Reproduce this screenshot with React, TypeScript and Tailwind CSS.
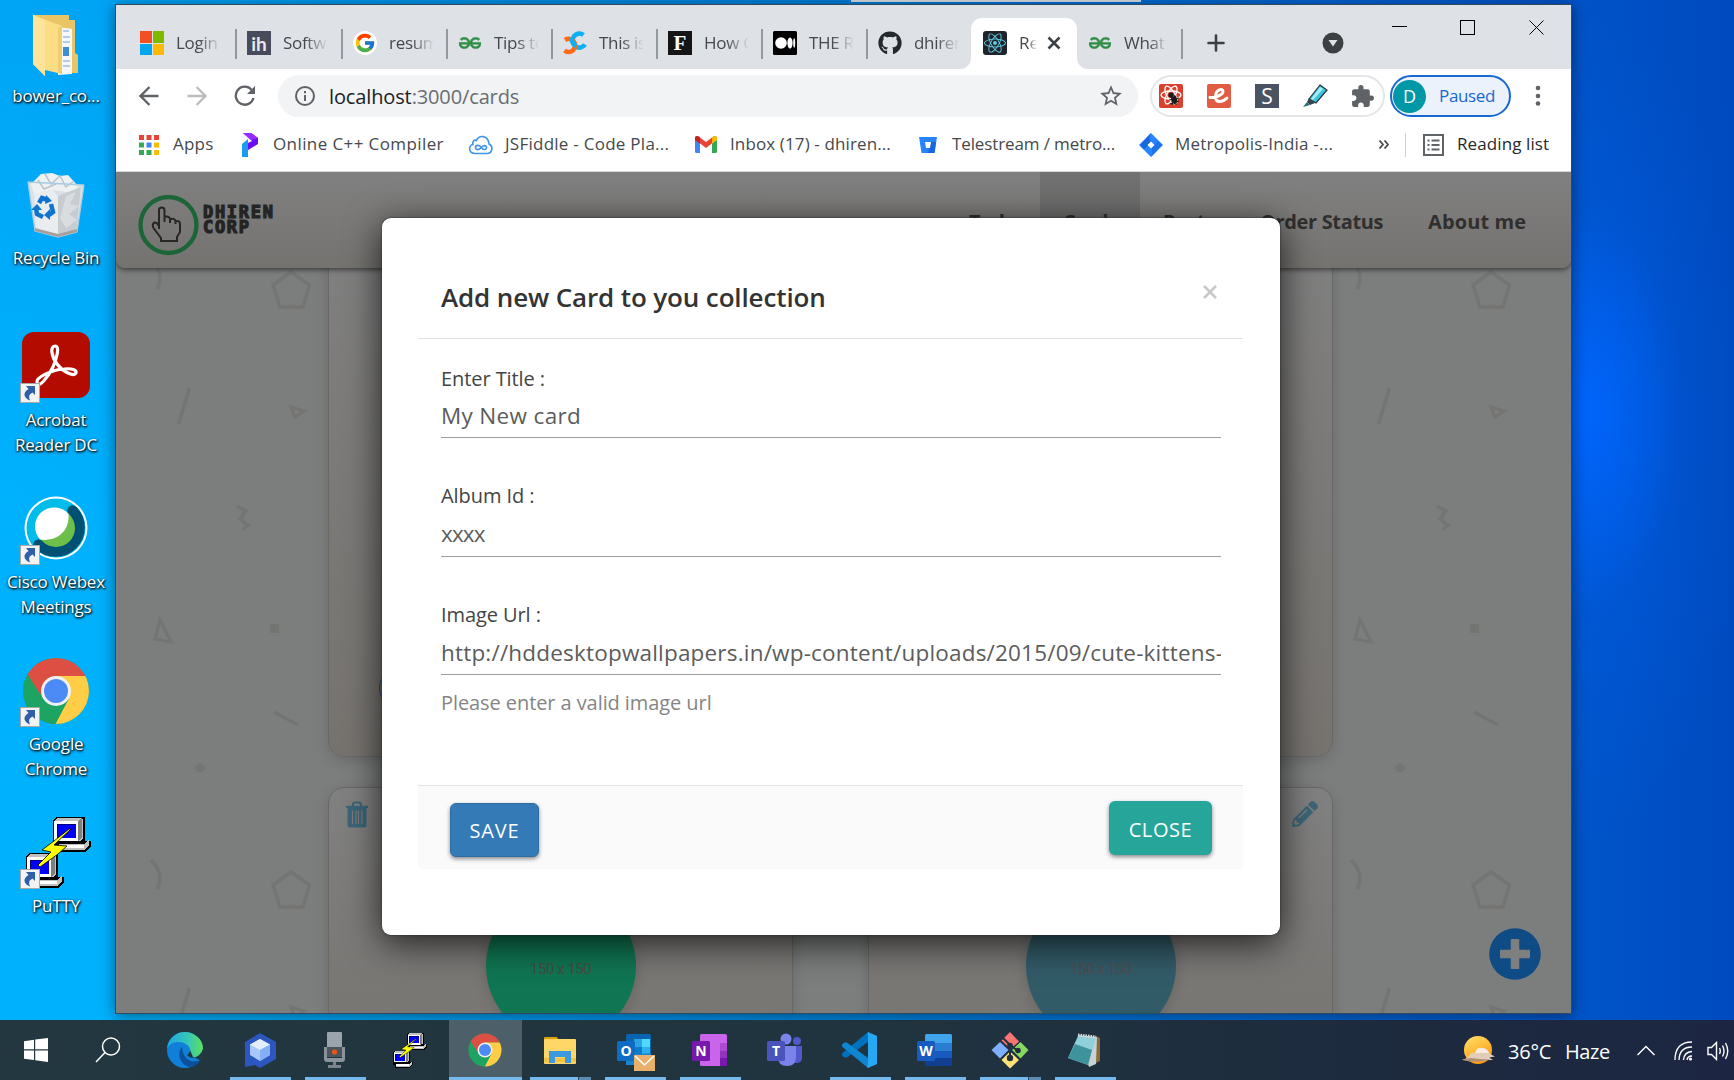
import React from "react";
import { FaGithub, FaPencilAlt, FaReact } from "react-icons/fa";
import { FcGoogle } from "react-icons/fc";
import { SiGeeksforgeeks } from "react-icons/si";
import { MdExtension, MdStarBorder } from "react-icons/md";

/* ---------- shared drawings ---------- */

function ChromeLogo({ id }: { id: string }) {
  return (
    <g>
      <clipPath id={id}>
        <circle cx="0" cy="0" r="33" />
      </clipPath>
      <g clipPath={`url(#${id})`}>
        <rect x="-33" y="-33" width="66" height="66" fill="#1da462" />
        <path d="M-40 -30L-13 7 0 -15H40V-40H-40z" fill="#dd4f43" />
        <path d="M0 -15H40V40H-4L13 7z" fill="#ffcd46" />
        <path d="M-28.500 -17L-13 8 0 15 13 7.500 -2 34H-40V-30z" fill="#1da462" />
      </g>
      <circle cx="0" cy="0" r="15" fill="#f1f1f1" />
      <circle cx="0" cy="0" r="12" fill="#4c8bf5" />
    </g>
  );
}

function PuttyComputer() {
  return (
    <g shapeRendering="crispEdges">
      <path d="M0 3L3 0H32V24H38V29L33 35H4V30H0z" fill="#000" />
      <path d="M1 4L4 1H28L30 3V22L27 24H1z" fill="#c0c0c0" />
      <path d="M1 4H25V24H1z" fill="#fff" />
      <path d="M25 4L29 1V21L25 24z" fill="#808080" />
      <rect x="4" y="7" width="19" height="14" fill="#00f" />
      <path d="M4 7H23V8H5V21H4z" fill="#00007b" />
      <path d="M6 27H31L36 23V28L32 33H6z" fill="#c0c0c0" />
      <path d="M6 28H31V31H6z" fill="#fff" />
    </g>
  );
}

function PuttyLogo() {
  return (
    <g>
      <g transform="translate(27 0)">
        <PuttyComputer />
      </g>
      <g transform="translate(0 36)">
        <PuttyComputer />
      </g>
      <path d="M45 12L28 28 41 29 32 37 14 50 12 48 25 35 16 33 28 24 43 12z" fill="#ff0" stroke="#000" strokeWidth="0.800" />
    </g>
  );
}

function ShortcutBadge() {
  return (
    <g transform="translate(20 59)">
      <rect x="0.500" y="0.500" width="19" height="19" fill="#f3f3f3" stroke="#a8a8a8" />
      <path d="M6 3H15V12L12.500 9.500C8 12 9 14 10 17.500 4 15 2 10 8.500 6z" fill="#2f5fa6" />
    </g>
  );
}

/* ---------- desktop ---------- */

function FolderIcon() {
  return (
    <>
      <path d="M33 15H69V20H75V53L78 55V73H60L33 60z" fill="#e9c566" />
      <path d="M58 27L72 29V74L58 75z" fill="#f5f7f9" />
      <path d="M63 31H69M63 37H70M63 42H70M63 61H70M63 66H70" stroke="#9fc0df" strokeWidth="1.500" />
      <path d="M63 47H69V56H63z" fill="#3f8fd0" />
      <path d="M33 15L62 26V74L45 70V76L33 64z" fill="#fbdd85" />
      <path d="M33 15L45 20V76L33 64z" fill="#fde49a" />
      <path d="M62 26L58 28V73L62 74z" fill="#f0cd70" />
    </>
  );
}

function RecycleIcon() {
  return (
    <>
      <path d="M28 20L84 23 77 70 58 75 35 69z" fill="#d9e1e6" />
      <path d="M31 22L41 12 52 11 60 14 68 13 78 24 74 31 52 28 34 32z" fill="#eef1f3" />
      <path d="M45 12L51 22 60 14 66 25 74 19M38 18L44 27 56 22" fill="none" stroke="#bcc5cb" strokeWidth="1.500" />
      <path d="M34 32L52 28 58 34V73L36 68z" fill="#e9edf0" />
      <path d="M58 34L81 25 76 70 58 75z" fill="#c7ccd1" />
      <path d="M66 34L76 30 70 42 79 44 69 52 77 58 66 66 60 56z" fill="#d9dde0" />
      <path d="M28 20L84 23M28 20L35 69 58 75 77 70 84 23" fill="none" stroke="#a8cbe0" strokeWidth="1.300" />
      <path d="M35 66L58 72 77 67V70L58 75 35 69z" fill="#a8a09c" />
      <g fill="none" stroke="#1173d0" strokeWidth="4.500">
        <path d="M39 41L42 36 48 38" />
        <path d="M51 42L53 50 49 53" />
        <path d="M43 55L37 52 36 46" />
      </g>
      <path d="M46 33L52 39 45 42zM50 47V58L44 53zM31 48L37 42 42 48z" fill="#1173d0" />
    </>
  );
}

function AcrobatIcon() {
  return (
    <>
      <rect x="22" y="8" width="68" height="66" rx="12" fill="#b30b00" />
      <path
        d="M37 58C36 54 50 46 64 45C72 44 77 46 76 49C74 53 63 48 57 40C51 32 50 22 55 22C60 22 57 33 53 43C48 53 38 66 37 58z"
        fill="none"
        stroke="#fff"
        strokeWidth="3.200"
      />
      <ShortcutBadge />
    </>
  );
}

function WebexIcon() {
  return (
    <>
      <circle cx="56" cy="42" r="31.500" fill="#fff" />
      <circle cx="56" cy="42" r="29.500" fill="#00bceb" />
      <path d="M72.500 24.500A24 24 0 1 1 38.500 58.500" fill="none" stroke="#005073" strokeWidth="10.500" strokeLinecap="round" />
      <circle cx="56" cy="42" r="19" fill="#6ebe4a" />
      <path d="M68.500 27.700A19 19 0 1 0 40 53.500C56 56 70 46 68.500 27.700z" fill="#fff" />
      <ShortcutBadge />
    </>
  );
}

const desktopItems = [
  { lines: ["bower_co..."], icon: <FolderIcon /> },
  { lines: ["Recycle Bin"], icon: <RecycleIcon /> },
  { lines: ["Acrobat", "Reader DC"], icon: <AcrobatIcon /> },
  { lines: ["Cisco Webex", "Meetings"], icon: <WebexIcon /> },
  {
    lines: ["Google", "Chrome"],
    icon: (
      <>
        <g transform="translate(56 43)">
          <ChromeLogo id="desk-chrome" />
        </g>
        <ShortcutBadge />
      </>
    ),
  },
  {
    lines: ["PuTTY"],
    icon: (
      <>
        <g transform="translate(26 7)">
          <PuttyLogo />
        </g>
        <ShortcutBadge />
      </>
    ),
  },
];

function Desktop() {
  return (
    <div className="flex w-[112px] flex-col">
      {desktopItems.map((d) => (
        <div key={d.lines[0]} className="flex h-[162px] flex-col items-center">
          <svg width="112" height="83" viewBox="0 0 112 83" className="shrink-0">
            {d.icon}
          </svg>
          {d.lines.map((l) => (
            <span
              key={l}
              className="text-[17px] leading-[25px] tracking-[-0.2px] whitespace-nowrap text-white [text-shadow:1px_1px_2px_#000,0_1px_3px_rgba(0,0,0,0.8)]"
            >
              {l}
            </span>
          ))}
        </div>
      ))}
    </div>
  );
}

/* ---------- tab strip ---------- */

const tabs = [
  {
    label: "Login",
    box: "w-[105px] pl-[8px]",
    icon: (
      <div className="grid h-6 w-6 grid-cols-2 gap-[1px]">
        <i className="bg-[#f25022]" />
        <i className="bg-[#7fba00]" />
        <i className="bg-[#00a4ef]" />
        <i className="bg-[#ffb900]" />
      </div>
    ),
  },
  {
    label: "Softwa",
    box: "w-[106px] pl-[10px]",
    icon: (
      <div className="flex h-6 w-6 items-end justify-center bg-[#474b5c] font-['Lato'] text-[19px] leading-[22px] font-bold text-[#e8e8ea]">
        ih
      </div>
    ),
  },
  {
    label: "resume",
    box: "w-[105px] pl-[10px]",
    icon: (
      <div className="flex h-6 w-6 items-center justify-center rounded-full bg-white">
        <FcGoogle size={22} />
      </div>
    ),
  },
  {
    label: "Tips to",
    box: "w-[105px] pl-[10px]",
    icon: <SiGeeksforgeeks size={22} color="#2f8d46" stroke="#2f8d46" strokeWidth="0.600" />,
  },
  {
    label: "This is",
    box: "w-[105px] pl-[10px]",
    icon: (
      <svg width="24" height="24" viewBox="0 0 24 24" fill="none" strokeWidth="4.600">
        <path d="M20.500 4A6.800 7 0 1 0 22 13.500" stroke="#0fb0f3" />
        <path d="M2 9A6.500 6.500 0 1 1 1.500 19.500" stroke="#ff6a13" />
        <path d="M9 6.500C8.500 10 10 13 13 15" stroke="#0fb0f3" />
      </svg>
    ),
  },
  {
    label: "How C",
    box: "w-[105px] pl-[10px]",
    icon: (
      <div className="flex h-6 w-6 items-center justify-center bg-[#151515] font-['Liberation_Serif'] text-[21px] leading-none font-bold text-white">
        F
      </div>
    ),
  },
  {
    label: "THE RI",
    box: "w-[105px] pl-[10px]",
    icon: (
      <svg width="24" height="24" viewBox="0 0 24 24">
        <rect width="24" height="24" rx="1.500" fill="#000" />
        <circle cx="8" cy="12" r="5.800" fill="#fff" />
        <ellipse cx="17" cy="12" rx="2.600" ry="5.500" fill="#fff" />
        <ellipse cx="21.200" cy="12" rx="1" ry="4.800" fill="#fff" />
      </svg>
    ),
  },
  { label: "dhiren", box: "w-[103px] pl-[10px]", icon: <FaGithub size={24} color="#24292e" /> },
];

function TabStrip() {
  return (
    <div className="flex h-[64px] shrink-0 bg-[#dee1e6]">
      <div className="flex pt-6 pl-[16px]">
        {tabs.map((t, i) => (
          <div
            key={t.label}
            className={"flex h-[30px] items-center " + t.box + (i < 7 ? " border-r-2 border-[#94989e]" : "")}
          >
            <div className="mb-[2px] flex h-6 w-6 shrink-0 items-center justify-center">{t.icon}</div>
            <span className="mb-[2px] ml-3 w-[45px] overflow-hidden text-[17px] leading-6 tracking-[-0.3px] whitespace-nowrap text-[#45494d] [mask-image:linear-gradient(to_right,#000_50%,transparent)]">
              {t.label}
            </span>
          </div>
        ))}
      </div>
      <div className="relative mt-[13px] flex h-[51px] w-[106px] items-center rounded-t-[11px] bg-white pb-[2px] pl-3">
        <svg className="absolute bottom-0 -left-[11px]" width="11" height="11" viewBox="0 0 11 11">
          <path d="M11 0V11H0A11 11 0 0 0 11 0z" fill="#fff" />
        </svg>
        <svg className="absolute -right-[11px] bottom-0" width="11" height="11" viewBox="0 0 11 11">
          <path d="M0 0V11H11A11 11 0 0 1 0 0z" fill="#fff" />
        </svg>
        <div className="flex h-6 w-6 items-center justify-center rounded-[3px] bg-[#20232a]">
          <FaReact size={22} color="#61c9e4" />
        </div>
        <span className="ml-3 w-[18px] overflow-hidden text-[17px] whitespace-nowrap text-[#45494d] [mask-image:linear-gradient(to_right,#000_50%,transparent)]">
          Rea
        </span>
        <svg className="ml-[10px]" width="14" height="14" viewBox="0 0 14 14" stroke="#3c4043" strokeWidth="2.500">
          <path d="M1.500 1.500L12.500 12.500M12.500 1.500L1.500 12.500" />
        </svg>
      </div>
      <div className="mt-6 ml-[12px] flex h-[30px] w-[94px] items-center border-r-2 border-[#94989e] pb-[2px]">
        <SiGeeksforgeeks size={22} color="#2f8d46" stroke="#2f8d46" strokeWidth="0.600" />
        <span className="ml-[13px] w-[43px] overflow-hidden text-[17px] tracking-[-0.3px] whitespace-nowrap text-[#45494d] [mask-image:linear-gradient(to_right,#000_60%,transparent)]">
          What i
        </span>
      </div>
      <svg className="mt-[29px] ml-[24px]" width="18" height="18" viewBox="0 0 18 18" stroke="#3c4043" strokeWidth="2.600" strokeLinecap="round">
        <path d="M9 1.500V16.500M1.500 9H16.500" />
      </svg>
      <svg className="mt-[27px] ml-[97px]" width="22" height="22" viewBox="0 0 22 22">
        <circle cx="11" cy="11" r="10.500" fill="#3c4043" />
        <path d="M6.500 8H15.500L11 14.500z" fill="#dee1e6" />
      </svg>
      <div className="mt-[15px] ml-[48px] flex gap-[53px]">
        <svg width="15" height="15" viewBox="0 0 15 15" stroke="#000">
          <path d="M0 6.500H15" />
        </svg>
        <svg width="15" height="15" viewBox="0 0 15 15" stroke="#000" fill="none">
          <rect x="0.500" y="0.500" width="14" height="14" />
        </svg>
        <svg className="ml-px" width="15" height="15" viewBox="0 0 15 15" stroke="#000">
          <path d="M0.500 0.500L14.500 14.500M14.500 0.500L0.500 14.500" />
        </svg>
      </div>
    </div>
  );
}

/* ---------- toolbar ---------- */

function Toolbar() {
  return (
    <div className="flex h-[54px] shrink-0 items-center bg-white">
      <svg className="ml-[23px]" width="20" height="20" viewBox="0 0 20 20" fill="none" stroke="#5f6368" strokeWidth="2.300">
        <path d="M19.500 10H2M10.500 1L1.500 10 10.500 19" />
      </svg>
      <svg className="ml-[28px]" width="20" height="20" viewBox="0 0 20 20" fill="none" stroke="#babcbe" strokeWidth="2.300">
        <path d="M0.500 10H18M9.500 1L18.500 10 9.500 19" />
      </svg>
      <svg className="ml-[27px]" width="22" height="22" viewBox="0 0 22 22" fill="none" stroke="#5f6368" strokeWidth="2.300">
        <path d="M19.500 13A9 9 0 1 1 17.500 4.700" />
        <path d="M21 1V9H13z" fill="#5f6368" stroke="none" />
      </svg>
      <div className="ml-[22px] flex h-[42px] w-[860px] items-center rounded-full bg-[#f1f3f4] pl-[17px]">
        <svg width="20" height="20" viewBox="0 0 20 20" fill="none" stroke="#5f6368" strokeWidth="2">
          <circle cx="10" cy="10" r="9" />
          <path d="M10 9V15M10 5V7.200" />
        </svg>
        <span className="ml-[14px] flex-1 pt-[1px] text-[20px] tracking-[-0.130px] text-[#696d71]">
          <span className="text-[#202124]">localhost</span>:3000/cards
        </span>
        <MdStarBorder size={26} color="#5f6368" className="mr-[14px]" />
      </div>
      <div className="ml-[12px] flex h-[42px] w-[235px] items-center rounded-full border-2 border-[#e3e5e8] pl-[7px]">
        <svg width="24" height="24" viewBox="0 0 24 24">
          <rect width="24" height="24" rx="2" fill="#d9412f" />
          <g fill="none" stroke="#fff" strokeWidth="1.300">
            <ellipse cx="12" cy="11" rx="10" ry="4" />
            <ellipse cx="12" cy="11" rx="10" ry="4" transform="rotate(60 12 11)" />
            <ellipse cx="12" cy="11" rx="10" ry="4" transform="rotate(120 12 11)" />
          </g>
          <circle cx="12" cy="11" r="2.600" fill="#1b1b1b" />
          <path d="M12 13L17 12 18.500 17 16 20.500 12.500 18z" fill="#1b1b1b" />
          <path d="M10 16L20 14M11 20L20 17M13 21L16 11M17 21V14" stroke="#1b1b1b" />
        </svg>
        <svg className="ml-6" width="24" height="24" viewBox="0 0 24 24" fill="none">
          <rect width="24" height="24" rx="2" fill="#e25b43" />
          <path d="M3 13.500C8 14 16 11 16 7.500 16 4 9 5 8.500 12 8 19 15 19 20 14" stroke="#fff" strokeWidth="3" strokeLinecap="round" />
        </svg>
        <div className="ml-6 flex h-6 w-6 items-center justify-center bg-[#4a5362] text-[21px] leading-none font-medium text-white">S</div>
        <svg className="ml-6" width="25" height="24" viewBox="0 0 25 24">
          <path d="M17 1L24 6 13 19 6 15z" fill="#3cc4de" stroke="#27323a" strokeWidth="1.200" />
          <path d="M17 3L20 5 10 16 8 15z" fill="#a9ecf5" />
          <path d="M6 14L12 19 7 21 4 18z" fill="#38444b" />
          <path d="M4 18L7 21 0 23z" fill="#2f6a7a" />
        </svg>
        <MdExtension size={25} color="#5f6368" className="ml-[22px]" />
      </div>
      <div className="ml-[5px] flex h-[42px] w-[121px] items-center rounded-full border-2 border-[#1967d2] bg-[#ecf2fc] pl-[1px]">
        <span className="flex h-[33px] w-[33px] items-center justify-center rounded-full bg-[#0097a7] text-[18px] text-white">D</span>
        <span className="ml-[13px] text-[17px] tracking-[-0.35px] text-[#1967d2]">Paused</span>
      </div>
      <svg className="ml-[24px]" width="6" height="22" viewBox="0 0 6 22" fill="#5f6368">
        <circle cx="3" cy="3" r="2.300" />
        <circle cx="3" cy="11" r="2.300" />
        <circle cx="3" cy="18.500" r="2.300" />
      </svg>
    </div>
  );
}

function Bookmark({ width, text, icon, label }: { width: string; text: string; icon: React.ReactNode; label: string }) {
  return (
    <div className={"flex items-center " + width}>
      {icon}
      <span className={"mb-[2px] whitespace-nowrap " + text}>{label}</span>
    </div>
  );
}

function BookmarksBar() {
  return (
    <div className="flex h-[49px] shrink-0 items-center border-b border-[#d5d7da] bg-white pb-[5px] pl-[23px] text-[17px] leading-6 text-[#45494d]">
      <Bookmark
        width="w-[103px]"
        text="ml-[14px] tracking-[0.2px]"
        label="Apps"
        icon={
          <svg width="20" height="20" viewBox="0 0 20 20">
            <path d="M0 0H5V5H0zM7.500 0H12.500V5H7.500zM15 0H20V5H15z" fill="#ea4335" />
            <path d="M0 7.500H5V12.500H0zM0 15H5V20H0zM7.500 15H12.500V20H7.500z" fill="#34a853" />
            <path d="M7.500 7.500H12.500V12.500H7.500z" fill="#4285f4" />
            <path d="M15 7.500H20V12.500H15zM15 15H20V20H15z" fill="#fbbc05" />
          </svg>
        }
      />
      <Bookmark
        width="w-[227px]"
        text="ml-[15px] tracking-[0.4px]"
        label="Online C++ Compiler"
        icon={
          <svg width="16" height="24" viewBox="0 0 16 24">
            <path d="M1 0H9L16 5V11L6 17V10L10 8z" fill="#6a0df0" />
            <path d="M1 0H9L16 5 9 7z" fill="#9a2bff" />
            <path d="M0 11L6 6V24H0z" fill="#1a9cf5" />
          </svg>
        }
      />
      <Bookmark
        width="w-[226px]"
        text="ml-[12px] tracking-[0.260px]"
        label="JSFiddle - Code Pla..."
        icon={
          <svg width="24" height="20" viewBox="0 0 24 20" fill="none" stroke="#3f95ea" strokeWidth="1.600">
            <path d="M6 18.500C-1 18.500 -0.500 10 4 9.500 3 6 5.500 4.500 7.500 5.500 10 -0.500 19 0 20 9 24.500 11 23.500 18.500 18 18.500z" />
            <path d="M12 12.200C10 9.500 6.500 10 6.500 12.500S10 15.500 12 12.800C14 10 17.500 10 17.500 12.500S14 15.500 12 12.200z" />
          </svg>
        }
      />
      <Bookmark
        width="w-[224px]"
        text="ml-[13px] tracking-[0.120px]"
        label="Inbox (17) - dhiren..."
        icon={
          <svg width="22" height="17" viewBox="0 0 22 17">
            <path d="M0 3H5V17H1.500Q0 17 0 15.500z" fill="#4285f4" />
            <path d="M17 3H22V15.500Q22 17 20.500 17H17z" fill="#34a853" />
            <path d="M0 3.500V2.500C0 0 2.500 -0.500 4 0.800L11 6 18 0.800C19.500 -0.500 22 0 22 2.500V3.500L11 12z" fill="#ea4335" />
            <path d="M17 1.500L18 0.800C19.500 -0.500 22 0 22 2.500V4L17 7.700z" fill="#fbbc04" />
            <path d="M5 1.500L4 0.800C2.500 -0.500 0 0 0 2.500V4L5 7.700z" fill="#c5221f" />
          </svg>
        }
      />
      <Bookmark
        width="w-[220px]"
        text="ml-[15px] tracking-[-0.120px]"
        label="Telestream / metro..."
        icon={
          <svg width="18" height="16" viewBox="0 0 18 16">
            <path d="M0 0H18L15.500 16H2.500z" fill="#2684ff" />
            <path d="M12 5H17L15.500 16H9z" fill="#1a66dd" />
            <path d="M6 5H12L11 11H7z" fill="#fff" />
          </svg>
        }
      />
      <Bookmark
        width="w-[240px]"
        text="ml-[12px] tracking-[0.220px]"
        label="Metropolis-India -..."
        icon={
          <svg width="24" height="24" viewBox="0 0 24 24">
            <path d="M12 0L24 12 12 24 0 12z" fill="#2684ff" />
            <path d="M12 0Q9 5 12 9L5 16.500 1 12z" fill="#1868db" />
            <path d="M12 24Q15 19 12 15L19 8 23 12z" fill="#1e72e8" />
            <path d="M12 8.500L15.500 12 12 15.500 8.500 12z" fill="#fff" />
          </svg>
        }
      />
      <svg width="10" height="9" viewBox="0 0 10 9" fill="none" stroke="#4b4f53" strokeWidth="1.800">
        <path d="M0.500 0.500L4 4.500 0.500 8.500M5.500 0.500L9 4.500 5.500 8.500" />
      </svg>
      <div className="ml-[16px] h-6 w-px bg-[#cfd1d4]" />
      <svg className="ml-[17px]" width="21" height="22" viewBox="0 0 21 22" fill="none" stroke="#5f6368" strokeWidth="2">
        <rect x="1" y="1" width="19" height="20" />
        <path d="M4.500 6.500H6.500M8.500 6.500H16.500M4.500 11H6.500M8.500 11H16.500M4.500 15.500H6.500M8.500 15.500H16.500" />
      </svg>
      <span className="mb-[2px] ml-[13px] tracking-[0.1px] text-[#27292c]">Reading list</span>
    </div>
  );
}

/* ---------- web page ---------- */

function PatternTile() {
  return (
    <g fill="none" stroke="#747473" strokeWidth="3.500">
      <path d="M151 260Q165 274 157 289" />
      <path d="M291 272L309.500 285 303 307H280L273 285z" />
      <path d="M189.500 388L178.500 424" />
      <path d="M291 407L304 411 295 417z" strokeWidth="3" />
      <path d="M237 506L246 511 240 519 248 525 243 530" />
      <path d="M160 620L155 639 171 642z" strokeWidth="3" />
      <path d="M270 628.500H279" strokeWidth="9" />
      <path d="M274 712L298 725" />
      <circle cx="200" cy="768" r="4.500" fill="#747473" stroke="none" />
    </g>
  );
}

function PagePattern() {
  return (
    <svg className="absolute inset-0" width="1455" height="841" viewBox="116 172 1455 841">
      <PatternTile />
      <g transform="translate(0 600)">
        <PatternTile />
      </g>
      <g transform="translate(1200 0)">
        <PatternTile />
      </g>
      <g transform="translate(1200 600)">
        <PatternTile />
      </g>
    </svg>
  );
}

function Card({ circle, text }: { circle: string; text: string }) {
  return (
    <div className="relative h-[560px] rounded-[16px] border border-[#696867] bg-[linear-gradient(to_bottom,#808080,#777470_50%)] px-4 pt-[13px] text-[#3b6678] shadow-[0_4px_14px_rgba(0,0,0,0.14)]">
      <div className="flex justify-between">
        <svg width="24" height="27" viewBox="0 0 24 27">
          <path d="M8 5V3.500Q8 1.500 10 1.500H14Q16 1.500 16 3.500V5" fill="none" stroke="currentColor" strokeWidth="2.200" />
          <path d="M1 4.800H23V7H1z" fill="currentColor" />
          <path d="M2.500 7H21.500V24Q21.500 26.500 19 26.500H5Q2.500 26.500 2.500 24z" fill="currentColor" />
          <path d="M7.500 9.500V23M11 9.500V23M13.500 9.500V23M17 9.500V23" stroke="#7d7c7a" strokeWidth="1.100" />
        </svg>
        <FaPencilAlt size={26} className="mr-[-2px]" />
      </div>
      <div
        className={
          "mx-auto mt-[63px] flex h-[150px] w-[150px] items-center justify-center rounded-full pt-[7px] font-['Roboto'] text-[15px] tracking-[-0.5px] shadow-[0_3px_14px_rgba(0,0,0,0.16)] " +
          circle
        }
      >
        <span className={text}>150 x 150</span>
      </div>
    </div>
  );
}

function SiteHeader() {
  return (
    <div className="relative z-10 flex h-[96px] rounded-b-[9px] bg-[linear-gradient(to_bottom,#808080,#757370)] shadow-[0_2px_5px_rgba(0,0,0,0.5)]">
      <svg className="mt-[23px] ml-[21px]" width="62" height="62" viewBox="0 0 62 62" fill="none">
        <circle cx="31.500" cy="30" r="28" stroke="#1b6537" strokeWidth="4.300" />
        <path
          d="M22 34V15Q22 12.500 24.700 12.500T27.500 15V27M27.500 22Q32 20.500 33 24V28M33 24.500Q37.500 22.500 38.500 26V29M38.500 26.500Q43 25 43 29V37L40 42V46H24V43L16.500 33Q14.500 29 17.500 27.500 20 27 22 31"
          stroke="#262625"
          strokeWidth="2"
        />
      </svg>
      <div className="mt-[33px] ml-[4px] w-[76px] font-['DejaVu_Sans_Mono'] text-[17px] leading-[14.500px] font-bold tracking-[1.7px] text-[#242424] [-webkit-text-stroke:1.200px_#242424]">
        <div>DHIREN</div>
        <div>CORP</div>
      </div>
      <div className="ml-auto flex pr-[44px] text-[20px] leading-[99px] font-bold tracking-[-0.35px] text-[#312f2e]">
        <span className="w-[94px] pl-[23px]">Todo</span>
        <span className="h-[96px] w-[100px] bg-[linear-gradient(to_bottom,#717171,#696765)] pl-[23px]">Cards</span>
        <span className="w-[98px] pl-[23px]">Posts</span>
        <span className="w-[168px] pl-[22px] whitespace-nowrap">Order Status</span>
        <span className="w-[121px] pl-[22px] tracking-[0.1px] whitespace-nowrap">About me</span>
      </div>
    </div>
  );
}

function Field({ label, value, box, hint }: { label: string; value: string; box: string; hint?: string }) {
  return (
    <div className="mb-[43px]">
      <div className="text-[20px] leading-[30px] tracking-[-0.080px] text-[#444]">{label}</div>
      <div
        className={"overflow-hidden border-b border-[#9e9e9e] text-[22.500px] whitespace-nowrap text-[#5c5c5c] " + box}
      >
        {value}
      </div>
      {hint && <div className="mt-[13px] text-[20px] leading-[30px] tracking-[-0.080px] text-[#858585]">{hint}</div>}
    </div>
  );
}

function Modal() {
  return (
    <div className="absolute top-[46px] left-[266px] z-20 h-[717px] w-[898px] rounded-[9px] bg-white pr-[37px] pl-[36px] shadow-[0_0_2px_#222,0_8px_36px_rgba(0,0,0,0.75)]">
      <div className="flex h-[121px] items-start justify-between border-b border-[#e2e2e2] pr-[26px] pl-[23px]">
        <h2 className="mt-[61px] text-[26px] leading-[36px] font-semibold tracking-[-0.130px] text-[#333]">
          Add new Card to you collection
        </h2>
        <svg className="mt-[67px]" width="14" height="14" viewBox="0 0 14 14" stroke="#c8c8c8" strokeWidth="2.600">
          <path d="M1 1L13 13M13 1L1 13" />
        </svg>
      </div>
      <div className="pt-[25px] pr-[22px] pl-[23px]">
        <Field label="Enter Title :" value="My New card" box="h-[44px] leading-[44px] tracking-[0.330px]" />
        <Field label="Album Id :" value="xxxx" box="h-[46px] leading-[46px] tracking-[-0.850px]" />
        <Field
          label="Image Url :"
          value="http://hddesktopwallpapers.in/wp-content/uploads/2015/09/cute-kittens-11.jpg"
          box="h-[45px] leading-[46px] tracking-[0.190px]"
          hint="Please enter a valid image url"
        />
      </div>
      <div className="mt-[67px] flex h-[84px] items-start justify-between rounded-b-[3px] border-t border-[#e2e2e2] bg-[#fafafa] pr-[31px] pl-[32px] text-[20px] text-white">
        <button className="mt-[17px] h-[54px] w-[89px] rounded-[6px] border border-[#2e6da4] bg-[#337ab7] pt-[2px] font-medium tracking-[0.8px] shadow-[0_2px_4px_rgba(0,0,0,0.45)]">
          SAVE
        </button>
        <button className="mt-[15px] h-[54px] w-[103px] rounded-[6px] bg-[#26a69a] pt-[3px] font-medium tracking-[0.6px] shadow-[0_2px_4px_rgba(0,0,0,0.45)]">
          CLOSE
        </button>
      </div>
    </div>
  );
}

function WebPage() {
  return (
    <div className="relative h-[841px] overflow-hidden bg-[#7c7e7d]">
      <PagePattern />
      <SiteHeader />
      <div className="relative -mt-[41px] ml-[212px] grid w-[1005px] grid-cols-2 gap-x-[75px] gap-y-[30px]">
        <div className="h-[530px] rounded-b-[16px] border border-[#696867] bg-[linear-gradient(to_bottom,#808080,#76736f)] shadow-[0_4px_14px_rgba(0,0,0,0.14)]">
          <div className="mt-[442px] ml-[50px] h-[36px] w-[36px] rounded-full border border-[#0f4c86]" />
        </div>
        <div className="h-[530px] rounded-b-[16px] border border-[#696867] bg-[linear-gradient(to_bottom,#808080,#76736f)] shadow-[0_4px_14px_rgba(0,0,0,0.14)]" />
        <Card circle="bg-[#107552]" text="text-[#464b46]" />
        <Card circle="bg-[#325b68]" text="text-[#4d4d4f]" />
      </div>
      <svg className="absolute right-[30px] bottom-[33px]" width="52" height="52" viewBox="0 0 52 52">
        <circle cx="26" cy="26" r="25.800" fill="#0f4c86" />
        <path d="M26 14V38M14 26H38" stroke="#7f7f7f" strokeWidth="8.500" />
        <path d="M23 12.500H29M23 39.500H29M12.500 23V29M39.500 23V29" stroke="#7f7f7f" strokeWidth="3" strokeLinecap="round" />
      </svg>
      <Modal />
    </div>
  );
}

/* ---------- taskbar ---------- */

function OfficeBadge({ x, letter, fill }: { x: number; letter: string; fill: string }) {
  return (
    <g>
      <rect x={x} y="11" width="18" height="20" rx="1.500" fill={fill} />
      <text x={x + 9} y="26" textAnchor="middle" fill="#fff" fontSize="14" fontWeight="700">
        {letter}
      </text>
    </g>
  );
}

const apps = [
  {
    name: "Edge",
    bar: "",
    icon: (
      <>
        <defs>
          <linearGradient id="edge-top" x1="0" x2="1">
            <stop offset="0" stopColor="#1fa6e8" />
            <stop offset="0.600" stopColor="#36c8b4" />
            <stop offset="1" stopColor="#5fe05a" />
          </linearGradient>
        </defs>
        <circle cx="20" cy="20" r="18" fill="#0f7fd8" />
        <path d="M2 19C3 8 11 2 20 2S38 9 38 18C38 26 30 28 26 27 21 26 25 24 25 20 25 15 19 12 13 12S4 15 2 19z" fill="url(#edge-top)" />
        <path d="M25 20C25 24 21 24 23 26 28 30 35 27 38 19 38.500 24 37 27 35 30L28 27z" fill="#22363f" />
        <path d="M17 17C12 22 14 35 25 37 31 36 34 33 35 30 27 34 18 30 17 17z" fill="#0c4f9c" />
      </>
    ),
  },
  {
    name: "Bot",
    bar: "w-[61px]",
    icon: (
      <>
        <path d="M20 3L36 12V29L20 38 15 35 5 37V12z" fill="#2c57c0" />
        <path d="M20 9L30 14.500V25L20 31 10 25V14.500z" fill="#a9c8fa" />
        <path d="M20 9L30 14.500 20 20 10 14.500z" fill="#e4eefe" />
        <path d="M20 20L30 14.500V25L20 31z" fill="#84aef5" />
      </>
    ),
  },
  {
    name: "Recorder",
    bar: "w-[61px]",
    icon: (
      <>
        <rect x="12" y="2" width="15" height="16" rx="1" fill="#9ba3ac" />
        <path d="M9 17H12V28H27V17H30V29Q30 32 27 32H12Q9 32 9 29z" fill="#8a929b" />
        <rect x="12" y="17" width="15" height="10" fill="#4c545c" />
        <circle cx="19.500" cy="22" r="2.600" fill="#e8551c" />
        <path d="M18 32H21V35H26V38H13V35H18z" fill="#7b838b" />
      </>
    ),
  },
  {
    name: "PuTTY",
    bar: "",
    icon: (
      <g transform="translate(3 3) scale(0.520 0.490)">
        <PuttyLogo />
      </g>
    ),
  },
  {
    name: "Chrome",
    bar: "w-[73px]",
    active: true,
    icon: (
      <g transform="translate(20 20) scale(0.500)">
        <ChromeLogo id="task-chrome" />
      </g>
    ),
  },
  {
    name: "Explorer",
    bar: "w-[61px]",
    split: true,
    icon: (
      <>
        <path d="M4 8Q4 7 5 7H17L19 11H4z" fill="#e0a000" />
        <rect x="4" y="9" width="32" height="25" rx="1" fill="#ffd667" />
        <rect x="4" y="28" width="32" height="4" fill="#f6c445" />
        <path d="M9 33V21H31V33H25V27H15V33z" fill="#3b9ae0" />
      </>
    ),
  },
  {
    name: "Outlook",
    bar: "w-[61px]",
    icon: (
      <>
        <rect x="11" y="4" width="25" height="30" rx="1.500" fill="#0a63ae" />
        <rect x="19" y="9" width="8" height="8" fill="#2fa1e2" />
        <rect x="27" y="9" width="8" height="8" fill="#50d9ff" />
        <rect x="19" y="17" width="8" height="8" fill="#0a7cc8" />
        <rect x="27" y="17" width="8" height="8" fill="#2fb0ee" />
        <path d="M11 25L36 23V35H11z" fill="#1a86d0" />
        <OfficeBadge x={2} letter="O" fill="#0f6cc4" />
        <rect x="19" y="25" width="21" height="16" fill="#e8b06a" />
        <path d="M20 26L29.500 35 39 26" fill="none" stroke="#fff" strokeWidth="1.500" />
      </>
    ),
  },
  {
    name: "OneNote",
    bar: "w-[61px]",
    icon: (
      <>
        <rect x="10" y="4" width="27" height="32" rx="1.500" fill="#ca64ea" />
        <rect x="30" y="13" width="7" height="8" fill="#ae4bd5" />
        <rect x="30" y="21" width="7" height="7" fill="#9332bf" />
        <rect x="30" y="28" width="7" height="8" fill="#7719aa" />
        <OfficeBadge x={2} letter="N" fill="#7719aa" />
      </>
    ),
  },
  {
    name: "Teams",
    bar: "",
    icon: (
      <>
        <circle cx="21" cy="9" r="5.500" fill="#7b83eb" />
        <circle cx="32" cy="11" r="4" fill="#5059c9" />
        <path d="M27 16H37V28Q37 33 31 33H27z" fill="#5059c9" />
        <path d="M13 16H31V27Q31 36 22 36T13 27z" fill="#7b83eb" />
        <OfficeBadge x={2} letter="T" fill="#4b53bc" />
      </>
    ),
  },
  {
    name: "Code",
    bar: "w-[61px]",
    icon: (
      <>
        <path d="M28 2L2.500 23Q1 24.500 2.500 26L4.500 27.500Q6 28 7.500 27L28 12z" fill="#0071bc" />
        <path d="M28 38L2.500 17Q1 15.500 2.500 14L4.500 12.500Q6 12 7.500 13L28 28z" fill="#0e86d0" />
        <path d="M28 2L37 6V34L28 38Q26.500 37 28 34V6Q27 3 28 2z" fill="#26a8f2" />
      </>
    ),
  },
  {
    name: "Word",
    bar: "w-[61px]",
    icon: (
      <>
        <rect x="10" y="4" width="27" height="32" rx="1.500" fill="#103f91" />
        <path d="M10 5.500Q10 4 11.500 4H35.500Q37 4 37 5.500V13H10z" fill="#41a5ee" />
        <rect x="10" y="13" width="27" height="8" fill="#2b7cd3" />
        <rect x="10" y="21" width="27" height="7" fill="#185abd" />
        <OfficeBadge x={2} letter="W" fill="#185abd" />
      </>
    ),
  },
  {
    name: "Git",
    bar: "w-[61px]",
    split: true,
    icon: (
      <>
        <path d="M20 2L29 11.500 20.500 19 11.500 10.500z" fill="#fa7474" />
        <path d="M10 12L18.500 20 10 28.500 1.500 20z" fill="#7fb0ff" />
        <path d="M30.500 12L38.500 20 30.500 28.500 22 20z" fill="#86d860" />
        <path d="M20 21.500L29 30 20 38.500 11.500 30z" fill="#ffe277" />
        <path d="M13 8L20 15V28M20 15L28 21" fill="none" stroke="#22303d" strokeWidth="2" />
        <circle cx="20" cy="28" r="3.200" fill="#22303d" />
        <circle cx="28" cy="20.500" r="2.800" fill="#22303d" />
        <circle cx="20" cy="15.500" r="2.800" fill="#22303d" />
      </>
    ),
  },
  {
    name: "Notepad",
    bar: "w-[61px]",
    icon: (
      <>
        <path d="M31 6L35 8V31L31 33z" fill="#8a6a35" />
        <path d="M13 5L32 7 31 34 24 37z" fill="#c9d3d6" />
        <path d="M13 6L31 8 23 35 3 28z" fill="#8fd0da" />
        <path d="M10 14L27 20 23 35 3 28z" fill="#3f939c" />
        <path d="M13 5L31 7" stroke="#d8dcde" strokeWidth="3" strokeDasharray="1.500 1" />
      </>
    ),
  },
];

function Taskbar() {
  return (
    <div className="absolute inset-x-0 bottom-0 flex h-[60px] overflow-hidden bg-[linear-gradient(to_right,#22373f,#20343f_50%,#1d2a3e_82%,#1c2643)]">
      <div className="flex w-[72px] items-center justify-center">
        <svg width="24" height="24" viewBox="0 0 24 24" fill="#fff">
          <path d="M0 3.200L10 1.800V11.300H0zM11.200 1.600L24 0V11.300H11.200zM0 12.600H10V22L0 20.700zM11.200 12.600H24V24L11.200 22.300z" />
        </svg>
      </div>
      <div className="flex w-[76px] items-center justify-center pr-[4px]">
        <svg width="26" height="26" viewBox="0 0 26 26" fill="none" stroke="#fff" strokeWidth="1.500">
          <circle cx="16" cy="9.500" r="8.500" />
          <path d="M10 15.500L1 25" />
        </svg>
      </div>
      {apps.map((a) => (
        <div key={a.name} className="relative flex w-[75px] shrink-0 justify-center">
          <div className={"flex w-[73px] justify-center pr-[2px] " + (a.active ? "bg-[#4d5f68]" : "")}>
            <svg width="40" height="42" viewBox="0 0 40 42" className="mt-[10px]">
              {a.icon}
            </svg>
          </div>
          {a.bar && (
            <div className={"absolute bottom-0 flex h-[3px] bg-[#76b9ed] " + a.bar}>
              {a.split && <div className="ml-auto w-[13px] border-l border-[#2d4a60] bg-[#5c8bb0]" />}
            </div>
          )}
        </div>
      ))}
      <div className="ml-auto flex items-center pt-[1px] pr-[5px] text-[20px] tracking-[-0.4px] text-white">
        <svg width="36" height="32" viewBox="0 0 36 32">
          <defs>
            <linearGradient id="sun" x1="0" y1="0" x2="0.500" y2="1">
              <stop offset="0" stopColor="#ffe36e" />
              <stop offset="1" stopColor="#ff9a0d" />
            </linearGradient>
          </defs>
          <circle cx="17" cy="15" r="14" fill="url(#sun)" />
          <path d="M8 21Q10 17 14 18 16 12 21 13 26 13 28 18L31 20 34 21.500 28 22.500 32 25 6 25.500 1 25 6 23z" fill="#e3cdb8" />
          <path d="M1 24.500L10 23 18 24 30 24.500 20 26.500H8z" fill="#b08f76" />
          <path d="M14 18Q16 12 21 13 26 13 28 18z" fill="#f5ebe2" />
        </svg>
        <span className="ml-[11px] w-[57px] pt-[2px] tracking-[-0.2px] whitespace-nowrap">36°C</span>
        <span className="w-[72px] pt-[2px]">Haze</span>
        <svg width="18" height="11" viewBox="0 0 18 11" fill="none" stroke="#fff" strokeWidth="1.500">
          <path d="M0.500 10L9 1.500 17.500 10" />
        </svg>
        <svg className="ml-[19px]" width="19" height="20" viewBox="0 0 19 20" fill="none" stroke="#fff" strokeWidth="1.300">
          <path d="M1 19Q1 1 18 1M5 19Q5.500 6 18 6M9.500 19Q10 11 18 10.500" />
          <path d="M13 19Q13.500 15 18 15" />
          <circle cx="16.500" cy="18" r="1.600" fill="#fff" stroke="none" />
        </svg>
        <svg className="ml-[14px]" width="22" height="20" viewBox="0 0 22 20" fill="none" stroke="#fff" strokeWidth="1.400">
          <path d="M1 6.500H4.500L9.500 1.500V18.500L4.500 13.500H1z" />
          <path d="M12.500 7Q14 10 12.500 13M15.500 4.500Q18.500 10 15.500 15.500M18.500 2Q23 10 18.500 18" />
        </svg>
      </div>
    </div>
  );
}

export default function App() {
  return (
    <div className="relative h-[1080px] w-[1734px] overflow-hidden bg-[radial-gradient(ellipse_95px_200px_at_1588px_413px,rgba(0,102,255,0.9),rgba(0,102,255,0)),radial-gradient(ellipse_160px_420px_at_1588px_430px,rgba(0,96,240,0.5),rgba(0,96,240,0)),linear-gradient(to_bottom,rgba(0,70,190,0.12),rgba(0,0,0,0)_50%),linear-gradient(to_right,#00b2fd,#00b0fc_8%,#0084de_48%,#0058cc_88%,#004abf)] font-['Open_Sans','Noto_Sans',sans-serif]">
      <Desktop />
      <div className="absolute top-0 left-[851px] h-[2px] w-[290px] bg-[#d4dde4]" />
      <div className="absolute top-[4px] left-[115px] flex h-[1010px] w-[1457px] flex-col border border-[#2f4a5c] bg-white shadow-[0_2px_14px_rgba(0,0,0,0.45)]">
        <TabStrip />
        <Toolbar />
        <BookmarksBar />
        <WebPage />
      </div>
      <Taskbar />
    </div>
  );
}
